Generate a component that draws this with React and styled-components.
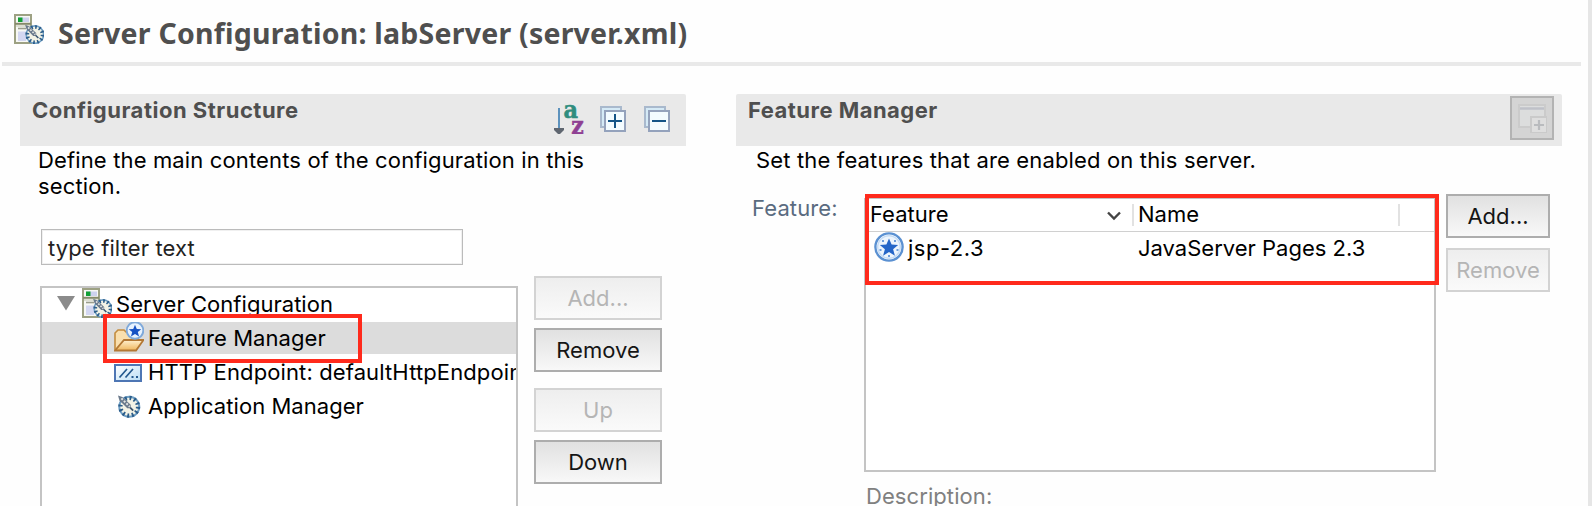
import React from "react";
import styled, { createGlobalStyle } from "styled-components";

const GlobalStyle = createGlobalStyle`
  * { box-sizing: border-box; }
  body { margin: 0; background: #fefefe; }
  svg { display: block; flex: none; }
`;

const Page = styled.div`
  width: 1592px;
  height: 506px;
  overflow: hidden;
  background: #fefefe;
  border-right: 4px solid #e6e6e6;
  font-family: Inter, "Liberation Sans", sans-serif;
  font-size: 22px;
  line-height: 26px;
  color: #000;
`;

const TitleBar = styled.header`
  display: flex;
  align-items: flex-start;
  gap: 14px;
  height: 66px;
  width: 1579px;
  margin-left: 2px;
  padding: 14px 0 0 12px;
  border-bottom: 4px solid #e9e9e9;
`;

const Title = styled.h1`
  margin: -1px 0 0;
  font: 700 28.5px/40px "Noto Sans", sans-serif;
  letter-spacing: 0.22px;
  color: #4f4f4f;
  white-space: nowrap;
`;

const Columns = styled.main`
  display: flex;
  gap: 50px;
  padding: 28px 0 0 20px;
`;

const Section = styled.section`
  width: ${(p) => p.$width}px;
  flex: none;
`;

const SectionHead = styled.div`
  display: flex;
  justify-content: space-between;
  height: 52px;
  background: #e9e9e9;
  border-radius: 2px 2px 0 0;
  padding: ${(p) => p.$pad};
`;

const Text = styled.span`
  display: block;
  letter-spacing: ${(p) => p.$track || 0}px;
  color: ${(p) => p.$color || "inherit"};
  white-space: nowrap;
`;

const SectionTitle = styled.h2`
  margin: 3px 0 0;
  font-size: 22px;
  font-weight: 700;
  line-height: 26px;
  letter-spacing: ${(p) => p.$track || 0}px;
  color: #4f4f4f;
`;

const Tools = styled.div`
  display: flex;
  align-items: center;
  gap: 18px;
  height: 30px;
  margin-top: 10px;
  svg:first-child { margin-right: -2px; }
`;

const Intro = styled.p`
  margin: 0;
  padding: 1px 0 0 ${(p) => p.$left}px;
  height: ${(p) => p.$height}px;
`;

const FilterBox = styled.div`
  width: 422px;
  height: 36px;
  margin-left: 21px;
  padding: 5px 0 0 6px;
  border: 1px solid #bbb;
  box-shadow: inset 0 0 0 1px #f0f0f0;
  background: #fff;
  color: #222;
`;

const StructureBody = styled.div`
  display: flex;
  gap: 16px;
  padding: 11px 0 0 20px;
`;

const Tree = styled.div`
  position: relative;
  display: flex;
  flex-direction: column;
  gap: 2px;
  width: 478px;
  height: 240px;
  margin-top: 10px;
  border: 2px solid #c4c4c4;
  background: #fff;
`;

const TreeRow = styled.div`
  display: flex;
  gap: ${(p) => p.$gap || 4}px;
  height: 32px;
  flex: none;
  padding-left: ${(p) => p.$indent}px;
  background: ${(p) => (p.$selected ? "#dcdcdc" : "transparent")};
  overflow: hidden;
  ${Text} { padding-top: 3px; }
`;

const Highlight = styled.div`
  position: absolute;
  left: ${(p) => p.$x}px;
  top: ${(p) => p.$y}px;
  width: ${(p) => p.$w}px;
  height: ${(p) => p.$h}px;
  border: 4px solid #ff2a1c;
  pointer-events: none;
`;

const ButtonColumn = styled.div`
  display: flex;
  flex-direction: column;
  gap: ${(p) => p.$gap}px;
`;

const ButtonPair = styled.div`
  display: flex;
  flex-direction: column;
  gap: 8px;
`;

const Button = styled.button`
  width: ${(p) => p.$width || 128}px;
  height: 44px;
  padding: 0 0 1px;
  border: 2px solid #adadad;
  background: linear-gradient(#e1e1e1, #f8f8f8);
  font: inherit;
  color: #151515;
  &:disabled {
    border-color: #d3d3d3;
    background: linear-gradient(#eeeeee, #fafafa);
    color: #b5b5b5;
  }
`;

const IconButton = styled.button`
  display: flex;
  width: 44px;
  height: 44px;
  margin-top: 2px;
  padding: 5px;
  border: 2px solid #b3b3b3;
  background: #d4d4d4;
`;

const FeatureBody = styled.div`
  display: flex;
  align-items: flex-start;
`;

const FieldLabel = styled.div`
  width: 128px;
  padding: 1px 0 0 16px;
`;

const TableColumn = styled.div`
  width: 572px;
  margin-right: 10px;
`;

const Table = styled.div`
  position: relative;
  margin-top: 4px;
  height: 274px;
  border: 2px solid #c4c4c4;
  border-top: 1px solid #c4c4c4;
  background: #fff;
`;

const TableHead = styled.div`
  display: grid;
  grid-template-columns: 268px 266px 1fr;
  height: 33px;
  padding-top: 5px;
  border-bottom: 1px solid #d0d0d0;
`;

const HeadCell = styled.div`
  display: flex;
  justify-content: space-between;
  align-items: flex-start;
  height: 22px;
  padding: 0 11px 0 4px;
  border-right: 2px solid #e2e2e2;
  ${Text} { margin-top: -3px; }
  svg { margin-top: 7px; }
`;

const TableRow = styled.div`
  display: grid;
  grid-template-columns: 268px 1fr;
  height: 32px;
`;

const Cell = styled.div`
  display: flex;
  gap: 4px;
  padding-left: ${(p) => p.$left}px;
  ${Text} { padding-top: 3px; }
`;

const Footer = styled.div`
  padding: 11px 0 0 2px;
`;

function Dial() {
  return (
    <g>
      <circle cx="12.500" cy="12.500" r="10.200" fill="#f3f3e6" stroke="#6f9fc4" strokeWidth="2" />
      <circle cx="12.500" cy="12.500" r="9" fill="none" stroke="#2c5d8a" strokeWidth="4.400" strokeDasharray="2 2.712" />
      <path d="M1 1 L5.500 2.500 L14 10.500 L14 14 L10.500 14 L2.500 6 Z" fill="#6b7a8c" />
      <path d="M4.500 4 L13 12.500" stroke="#e3e6e3" strokeWidth="2" strokeDasharray="2 1.600" />
      <path d="M13.500 13.500 L16.500 16.500" stroke="#38536f" strokeWidth="1.800" />
    </g>
  );
}

function ServerIcon() {
  return (
    <svg width="30" height="30" viewBox="0 0 30 30">
      <rect x="1" y="1" width="16" height="28" fill="#f7f8f4" stroke="#9da183" strokeWidth="2" />
      <rect x="4" y="3.500" width="11" height="4.500" fill="#cdd2ee" />
      <rect x="4" y="3.500" width="4.500" height="4.500" fill="#12a035" />
      <path d="M1 9.800h16" stroke="#85896a" strokeWidth="2" />
      <path d="M2 12h14" stroke="#d6d8ca" strokeWidth="1.600" />
      <path d="M4 14.500h8" stroke="#9a9d8c" strokeWidth="1.600" />
      <rect x="4" y="17.500" width="8" height="9.500" fill="#d3d7f1" />
      <g transform="translate(10.300 10) scale(.85)"><Dial /></g>
    </svg>
  );
}

function DialIcon() {
  return (
    <svg width="24" height="32" viewBox="0 0 24 32">
      <g transform="translate(0 4.500) scale(.98)"><Dial /></g>
    </svg>
  );
}

const STAR = "M0 -8 L2.300 -2.700 L8 -2.300 L3.600 1.300 L5.200 7 L0 3.800 L-5.200 7 L-3.600 1.300 L-8 -2.300 L-2.300 -2.700 Z";

function FolderIcon() {
  return (
    <svg width="30" height="30" viewBox="0 0 30 30">
      <defs>
        <linearGradient id="flap" x1="0" y1="0" x2="0" y2="1">
          <stop offset="0" stopColor="#fff0cf" />
          <stop offset="1" stopColor="#efb65c" />
        </linearGradient>
      </defs>
      <path d="M1 28 V11 L4 8 H10 L12 10 H24 V18" fill="#f9dfae" stroke="#c38c3f" strokeWidth="1.600" />
      <path d="M1 28.500 L10 18 H29.500 L22 28.500 Z" fill="url(#flap)" stroke="#b37834" strokeWidth="1.800" />
      <circle cx="21" cy="8.500" r="8.300" fill="#e8f3ff" stroke="#7fa9da" strokeWidth="1.900" />
      <path d={STAR} transform="translate(21 9) scale(.78)" fill="#1652c4" />
    </svg>
  );
}

function FeatureIcon() {
  return (
    <svg width="30" height="30" viewBox="0 0 30 30">
      <circle cx="15" cy="15" r="13.600" fill="#fff" stroke="#5b91d2" strokeWidth="2.400" />
      <circle cx="15" cy="15" r="11.300" fill="#edf5fd" stroke="#c5dcf5" strokeWidth="1.400" />
      <path d={STAR} transform="translate(15 15.700) scale(1.14)" fill="#2566c8" />
      <path d="M8 8h2v2h-2zM20 8h2v2h-2zM5.500 17h2v2h-2zM22.500 17h2v2h-2zM14 23h2v2h-2z" fill="#6d9ddb" />
    </svg>
  );
}

function EndpointIcon() {
  return (
    <svg width="28" height="32" viewBox="0 0 28 32">
      <defs>
        <linearGradient id="screen" x1="0" y1="0" x2="1" y2="1">
          <stop offset="0" stopColor="#ffffff" />
          <stop offset="1" stopColor="#b9def5" />
        </linearGradient>
      </defs>
      <rect x="1" y="9" width="26" height="16" fill="url(#screen)" stroke="#4e76b4" strokeWidth="2" />
      <path d="M5.500 21.500 L13 13 M11.500 21.500 L19 13" stroke="#245a8f" strokeWidth="1.700" />
      <path d="M17.500 20h2v2h-2zM22 20h2v2h-2z" fill="#245a8f" />
    </svg>
  );
}

function Disclosure() {
  return (
    <svg width="21" height="32" viewBox="0 0 21 32">
      <path d="M0 8h18l-9 14.500z" fill="#8b8b8b" />
    </svg>
  );
}

function SortIcon() {
  return (
    <svg width="30" height="30" viewBox="0 0 30 30">
      <path d="M5 4v22" stroke="#5d92bd" strokeWidth="2" />
      <path d="M0 24h10v2l-4 4h-2l-4-4z" fill="#5f6670" />
      <g fontFamily="'DejaVu Serif', serif" fontWeight="700" fontSize="25" strokeWidth="0.600">
        <text x="9.500" y="13.600" textLength="14.500" lengthAdjust="spacingAndGlyphs" fill="#2f8d7e" stroke="#2f8d7e">a</text>
        <text x="17.300" y="29.700" textLength="12.500" lengthAdjust="spacingAndGlyphs" fill="#8f3f93" stroke="#8f3f93">z</text>
      </g>
    </svg>
  );
}

function BoxesIcon({ plus }) {
  return (
    <svg width="26" height="26" viewBox="0 0 26 26">
      <rect x="1" y="1" width="20" height="20" fill="#d5eaf6" stroke="#a9b9cd" strokeWidth="2" />
      <rect x="5" y="5" width="20" height="20" fill="#f3fbff" stroke="#94a2bc" strokeWidth="2" />
      <path d={plus ? "M8 15h14M15 8v14" : "M8 15h14"} stroke="#145487" strokeWidth="2" />
    </svg>
  );
}

function AddWindowIcon() {
  return (
    <svg width="30" height="30" viewBox="0 0 30 30">
      <rect x="2" y="2" width="26" height="22" fill="#dcdddd" stroke="#cbcbcb" strokeWidth="2" />
      <path d="M3 5.500h24" stroke="#bfc1c8" strokeWidth="2.500" />
      <rect x="14" y="14" width="16" height="16" fill="#dedede" stroke="#cacaca" strokeWidth="2" />
      <path d="M17 22h10M22 17v10" stroke="#b9bbbe" strokeWidth="2.200" />
    </svg>
  );
}

function Chevron() {
  return (
    <svg width="14" height="10" viewBox="0 0 14 10">
      <path d="M1 1.500l6 6 6-6" fill="none" stroke="#444" strokeWidth="2.400" />
    </svg>
  );
}

export default function App() {
  return (
    <Page>
      <GlobalStyle />
      <TitleBar>
        <ServerIcon />
        <Title>Server Configuration: labServer (server.xml)</Title>
      </TitleBar>
      <Columns>
        <Section $width={666}>
          <SectionHead $pad="0 16px 0 12px">
            <SectionTitle $track={0.5}>Configuration Structure</SectionTitle>
            <Tools>
              <SortIcon />
              <BoxesIcon plus />
              <BoxesIcon />
            </Tools>
          </SectionHead>
          <Intro $left={18} $height={83}>
            <Text $track={0.14}>Define the main contents of the configuration in this</Text>
            <Text $track={0.14}>section.</Text>
          </Intro>
          <FilterBox>
            <Text $track={0.13}>type filter text</Text>
          </FilterBox>
          <StructureBody>
            <Tree>
              <TreeRow $indent={15}>
                <Disclosure />
                <ServerIcon />
                <Text $track={0.03}>Server Configuration</Text>
              </TreeRow>
              <TreeRow $indent={72} $selected>
                <FolderIcon />
                <Text $track={0.06}>Feature Manager</Text>
              </TreeRow>
              <TreeRow $indent={72} $gap={6}>
                <EndpointIcon />
                <Text $track={0.12}>HTTP Endpoint: defaultHttpEndpoint</Text>
              </TreeRow>
              <TreeRow $indent={75} $gap={7}>
                <DialIcon />
                <Text $track={0.05}>Application Manager</Text>
              </TreeRow>
              <Highlight $x={61} $y={26} $w={259} $h={49} />
            </Tree>
            <ButtonColumn $gap={16}>
              <ButtonPair>
                <Button disabled>Add...</Button>
                <Button>Remove</Button>
              </ButtonPair>
              <ButtonPair>
                <Button disabled>Up</Button>
                <Button>Down</Button>
              </ButtonPair>
            </ButtonColumn>
          </StructureBody>
        </Section>
        <Section $width={826}>
          <SectionHead $pad="0 8px 0 12px">
            <SectionTitle $track={0.48}>Feature Manager</SectionTitle>
            <IconButton aria-label="Add feature">
              <AddWindowIcon />
            </IconButton>
          </SectionHead>
          <Intro $left={20} $height={48}>
            <Text $track={0.15}>Set the features that are enabled on this server.</Text>
          </Intro>
          <FeatureBody>
            <FieldLabel>
              <Text $color="#5a6b80" $track={0.12}>Feature:</Text>
            </FieldLabel>
            <TableColumn>
              <Table>
                <TableHead>
                  <HeadCell>
                    <Text>Feature</Text>
                    <Chevron />
                  </HeadCell>
                  <HeadCell>
                    <Text>Name</Text>
                  </HeadCell>
                </TableHead>
                <TableRow>
                  <Cell $left={8}>
                    <FeatureIcon />
                    <Text $track={0.5}>jsp-2.3</Text>
                  </Cell>
                  <Cell $left={4}>
                    <Text>JavaServer Pages 2.3</Text>
                  </Cell>
                </TableRow>
                <Highlight $x={-1} $y={-5} $w={574} $h={91} />
              </Table>
              <Footer>
                <Text $color="#808080" $track={0.08}>Description:</Text>
              </Footer>
            </TableColumn>
            <ButtonColumn $gap={10}>
              <Button $width={104}>Add...</Button>
              <Button $width={104} disabled>Remove</Button>
            </ButtonColumn>
          </FeatureBody>
        </Section>
      </Columns>
    </Page>
  );
}
